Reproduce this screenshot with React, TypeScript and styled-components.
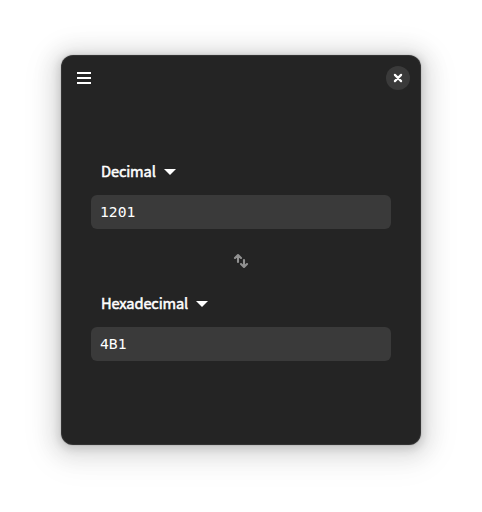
import React, { useState } from "react";
import styled, { createGlobalStyle } from "styled-components";

const GlobalStyle = createGlobalStyle`
  * { box-sizing: border-box; }
  body { margin: 0; background: #fff; }
`;

const Desktop = styled.div`
  width: 482px;
  height: 512px;
  padding: 55px 61px 67px;
  overflow: hidden;
`;

const Window = styled.main`
  width: 360px;
  height: 390px;
  display: flex;
  flex-direction: column;
  border-radius: 12px;
  background: #242424;
  color: #fff;
  box-shadow:
    inset 0 0 0 1px rgba(255, 255, 255, 0.07),
    0 2px 8px 2px rgba(0, 0, 0, 0.13),
    0 3px 20px 10px rgba(0, 0, 0, 0.09),
    0 6px 32px 16px rgba(0, 0, 0, 0.04),
    0 0 0 1px rgba(0, 0, 0, 0.05);
`;

const HeaderBar = styled.header`
  height: 46px;
  flex: none;
  display: flex;
  align-items: center;
  justify-content: space-between;
  padding: 0 11px 0 6px;
`;

const IconButton = styled.button<{ $size: number; $round?: boolean }>`
  width: ${(p) => p.$size}px;
  height: ${(p) => p.$size}px;
  display: grid;
  place-items: center;
  padding: 0;
  border: 0;
  border-radius: ${(p) => (p.$round ? "50%" : "6px")};
  background: ${(p) => (p.$round ? "#3a3a3a" : "transparent")};
  color: #fff;

  svg { display: block; }
`;

const Content = styled.section`
  display: flex;
  flex-direction: column;
  padding: 54px 30px 0;
`;

const BasePicker = styled.button`
  height: 34px;
  align-self: flex-start;
  display: flex;
  align-items: center;
  gap: 8px;
  padding: 0 10px;
  border: 0;
  background: transparent;
  color: #fff;
`;

const BaseName = styled.span<{ $width: number }>`
  width: ${(p) => p.$width}px;
  padding-bottom: 2px;
  font: 400 14.67px/20px "Noto Sans CJK SC", sans-serif;
  letter-spacing: -0.15px;
  -webkit-text-stroke: 0.5px currentColor;
  text-align: left;
  white-space: nowrap;
`;

const Entry = styled.input`
  width: 300px;
  height: 34px;
  margin: 6px 0 0;
  padding: 0 9px 2px;
  border: 0;
  border-radius: 6px;
  outline: 0;
  background: #3a3a3a;
  color: #fff;
  font: 14.67px "DejaVu Sans Mono", monospace;
`;

const SwapRow = styled.div`
  height: 58px;
  display: grid;
  place-items: center;
  padding-top: 6px;

  button { color: #919191; }
`;

const MenuIcon = () => (
  <svg width="16" height="16" viewBox="0 0 16 16" fill="currentColor">
    <path d="M1 2h14v2H1zM1 7h14v2H1zM1 12h14v2H1z" />
  </svg>
);

const CloseIcon = () => (
  <svg width="16" height="16" viewBox="0 0 16 16" fill="none" stroke="currentColor" strokeWidth="2.2" strokeLinecap="round">
    <path d="M4.9 4.9l6.2 6.2M11.1 4.9l-6.2 6.2" />
  </svg>
);

const DropIcon = () => (
  <svg width="12" height="6" viewBox="0 0 12 6" fill="currentColor">
    <path d="M0 0h12L6 6z" />
  </svg>
);

const SwapIcon = () => (
  <svg width="16" height="16" viewBox="0 0 16 16" fill="none" stroke="currentColor" strokeWidth="2.1" strokeLinecap="round" strokeLinejoin="round">
    <path d="M5 9V2.4M2 5l3-3 3 3M11 7v6.6M8 11l3 3 3-3" />
  </svg>
);

type Field = { base: string; value: string; width: number };

const initial: Field[] = [
  { base: "Decimal", value: "1201", width: 55 },
  { base: "Hexadecimal", value: "4B1", width: 87 },
];

function BaseField({ field }: { field: Field }) {
  const [value, setValue] = useState(field.value);
  return (
    <>
      <BasePicker>
        <BaseName $width={field.width}>{field.base}</BaseName>
        <DropIcon />
      </BasePicker>
      <Entry aria-label={field.base} value={value} onChange={(e) => setValue(e.target.value)} />
    </>
  );
}

export default function App() {
  return (
    <Desktop>
      <GlobalStyle />
      <Window>
        <HeaderBar>
          <IconButton $size={34} aria-label="Menu"><MenuIcon /></IconButton>
          <IconButton $size={24} $round aria-label="Close"><CloseIcon /></IconButton>
        </HeaderBar>
        <Content>
          <BaseField field={initial[0]} />
          <SwapRow>
            <IconButton $size={34} aria-label="Swap bases"><SwapIcon /></IconButton>
          </SwapRow>
          <BaseField field={initial[1]} />
        </Content>
      </Window>
    </Desktop>
  );
}
